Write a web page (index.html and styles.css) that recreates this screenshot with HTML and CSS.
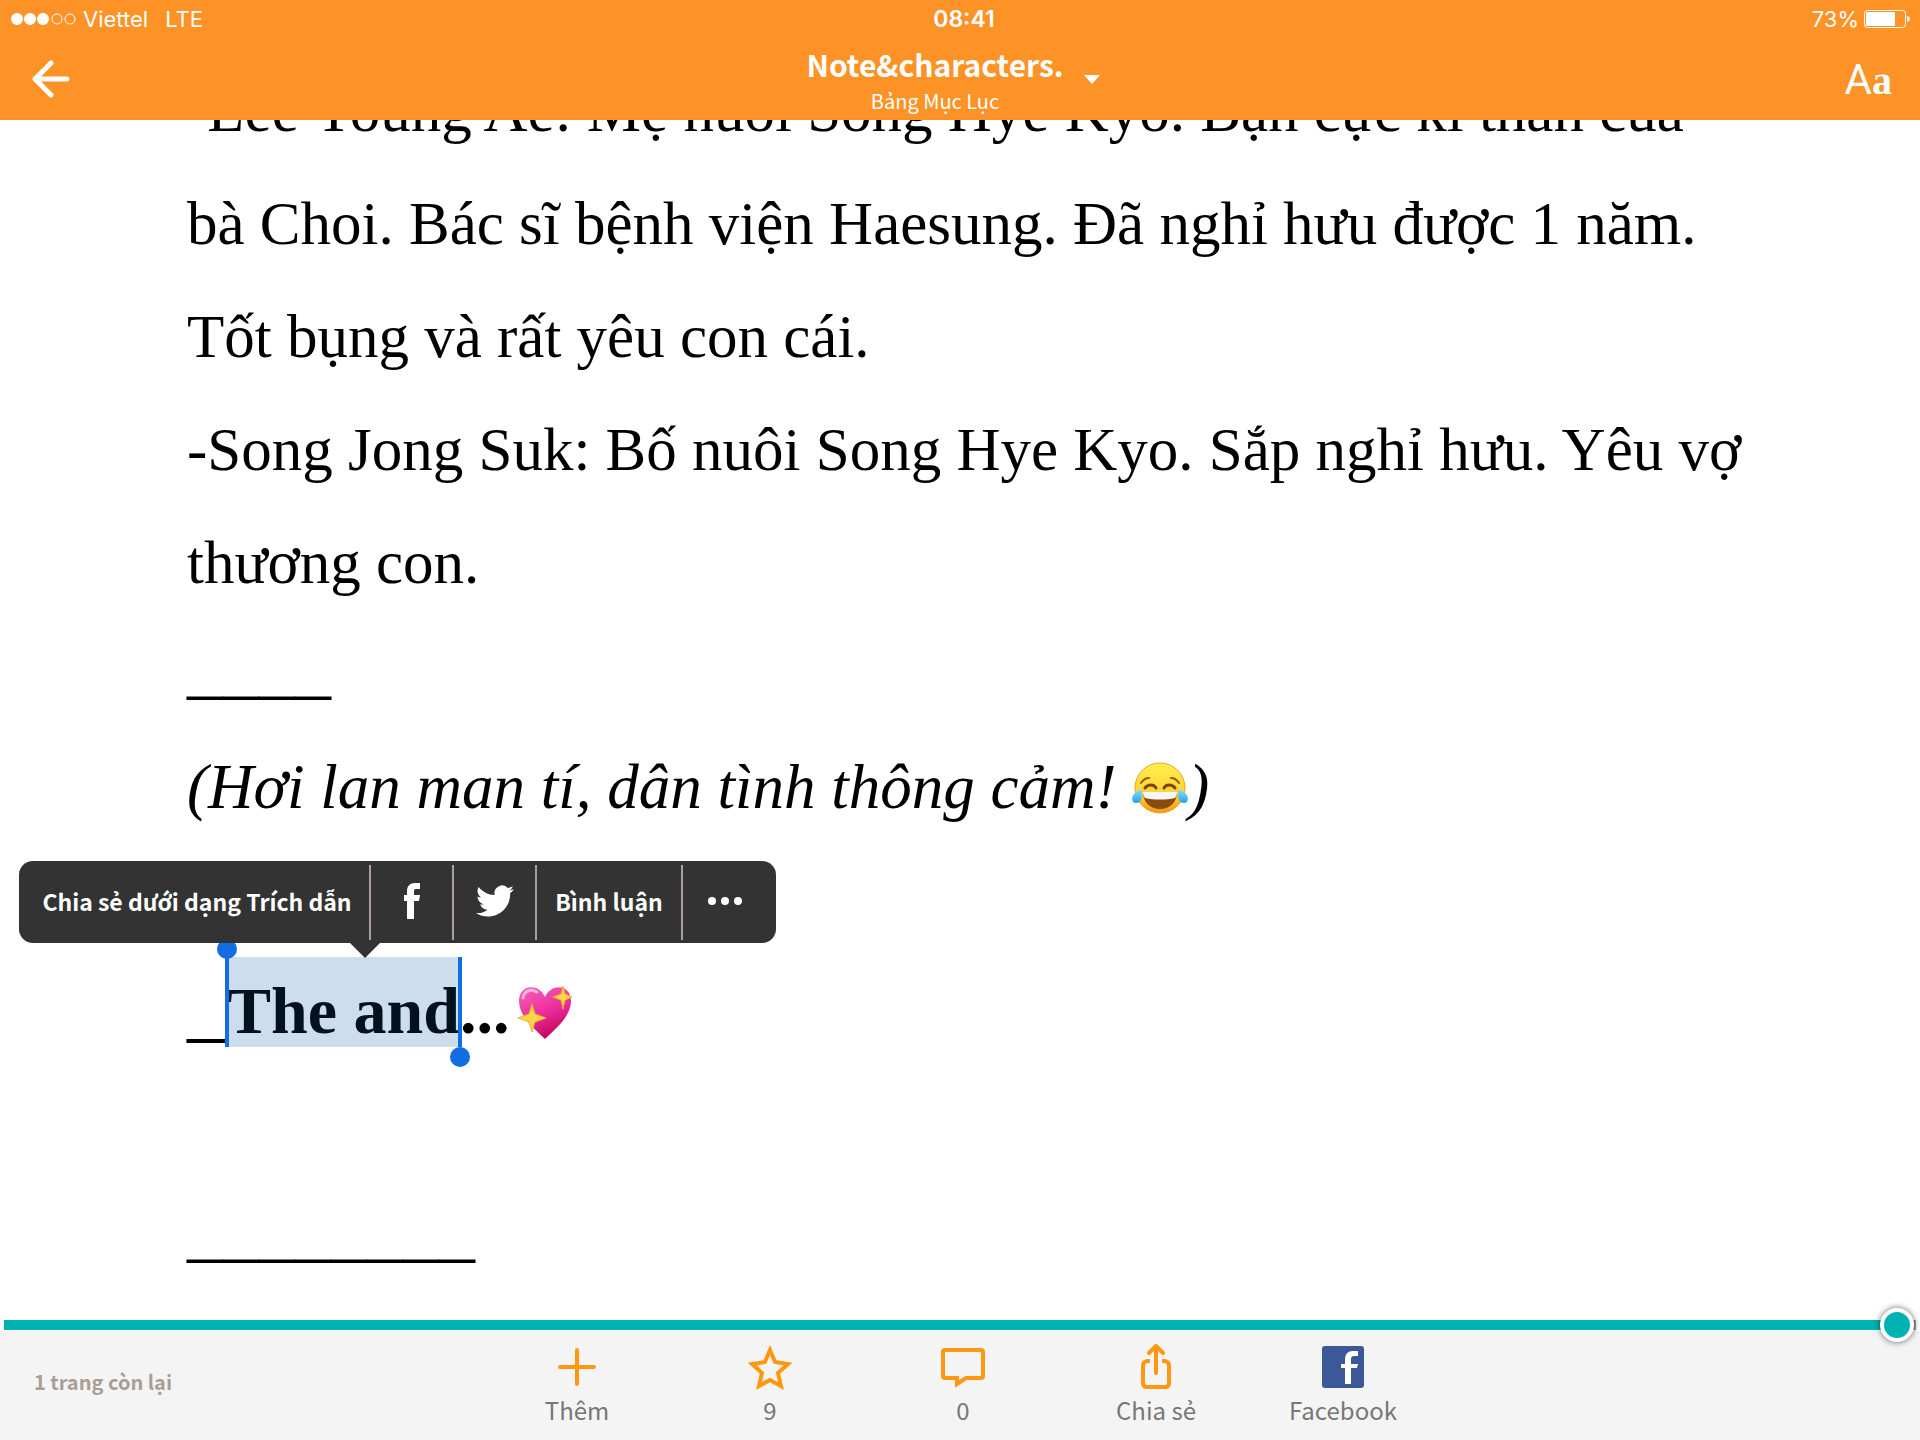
FILE: index.html
```html
<!DOCTYPE html>
<html lang="vi">
<head>
    <meta charset="UTF-8">
    <meta name="viewport" content="width=device-width, initial-scale=1.0">
    <title>Note&amp;characters.</title>
    <link rel="stylesheet" href="styles.css">
</head>
<body>
    <header class="header">
        <div class="status-bar">
            <div class="carrier">
                <svg class="signal" width="68" height="14" viewBox="0 0 68 14">
                    <circle cx="7" cy="7" r="6" fill="#fff"/>
                    <circle cx="20" cy="7" r="6" fill="#fff"/>
                    <circle cx="33" cy="7" r="6" fill="#fff"/>
                    <circle cx="47" cy="7" r="5" fill="none" stroke="#fff"/>
                    <circle cx="60" cy="7" r="5" fill="none" stroke="#fff"/>
                </svg>
                <span>Viettel</span>
                <span class="network">LTE</span>
            </div>
            <div class="time">08:41</div>
            <div class="battery">
                <span>73%</span>
                <svg width="46" height="18" viewBox="0 0 46 18">
                    <rect x="0.5" y="0.5" width="41" height="17" rx="3" fill="none" stroke="#fff"/>
                    <rect x="2" y="2" width="29" height="14" rx="1" fill="#fff"/>
                    <path d="M43 6c4 1 4 5 0 6z" fill="#fff"/>
                </svg>
            </div>
        </div>
        <nav class="nav-bar">
            <button class="back-btn" aria-label="Quay lại">
                <svg width="38" height="38" viewBox="0 0 38 38" fill="none" stroke="#fff" stroke-width="5" stroke-linecap="round" stroke-linejoin="round">
                    <path d="M19 3L3 19l16 16M4 19h31"/>
                </svg>
            </button>
            <button class="chapter-btn">
                <span class="chapter-names">
                    <span class="chapter-title">Note&amp;characters.</span>
                    <span class="chapter-sub">Bảng Mục Lục</span>
                </span>
                <svg class="caret" width="16" height="9" viewBox="0 0 16 9"><path d="M0 0h16L8 9z" fill="#fff"/></svg>
            </button>
            <button class="font-btn"><span class="font-sans">A</span><span class="font-serif">a</span></button>
        </nav>
    </header>

    <main class="reader">
        <article class="story">
            <p>-Lee Young Ae: Mẹ nuôi Song Hye Kyo. Bạn cực kì thân của<br>bà Choi. Bác sĩ bệnh viện Haesung. Đã nghỉ hưu được 1 năm.<br>Tốt bụng và rất yêu con cái.</p>
            <p>-Song Jong Suk: Bố nuôi Song Hye Kyo. Sắp nghỉ hưu. Yêu vợ<br>thương con.</p>
            <p class="rule">____</p>
            <p class="single"><em>(Hơi lan man tí, dân tình thông cảm! <svg class="emoji" viewBox="0 0 56 54" role="img" aria-label="😂">
                <defs>
                    <linearGradient id="face" x1="0" y1="0" x2="0" y2="1">
                        <stop offset="0" stop-color="#fff04f"/>
                        <stop offset="0.6" stop-color="#fdd236"/>
                        <stop offset="1" stop-color="#f09a1a"/>
                    </linearGradient>
                    <linearGradient id="tear" x1="0" y1="0" x2="0" y2="1">
                        <stop offset="0" stop-color="#8fe0fb"/>
                        <stop offset="1" stop-color="#1ba4ec"/>
                    </linearGradient>
                </defs>
                <circle cx="28" cy="27" r="25" fill="url(#face)" stroke="#f3a01e"/>
                <path d="M9 22c2-3 4-5 8-5M47 22c-2-3-4-5-8-5" fill="none" stroke="#9b5a10" stroke-width="2" stroke-linecap="round"/>
                <path d="M13 27c3-4 9-4 11 0M32 27c2-4 8-4 11 0" fill="none" stroke="#7a430b" stroke-width="3" stroke-linecap="round"/>
                <path d="M11 31h34c0 10-7 17-17 17S11 41 11 31z" fill="#8a4a08"/>
                <path d="M11 31h34c0 3-1 5-2 6-9 2-21 2-30 0-1-1-2-3-2-6z" fill="#f4f6fa"/>
                <path d="M10 28c0 8 0 14-6 14-5 0-5-7-1-10 2-2 5-2 7-4zM46 28c0 8 0 14 6 14 5 0 5-7 1-10-2-2-5-2-7-4z" fill="url(#tear)"/>
            </svg>)</em></p>
            <p class="ending"><strong><span class="lead">_</span><span class="selected">The and<i class="handle handle-start"></i><i class="handle handle-end"></i></span>...<svg class="emoji emoji-heart" viewBox="0 0 56 54" role="img" aria-label="💖">
                <defs>
                    <linearGradient id="heart" x1="0" y1="0" x2="0.4" y2="1">
                        <stop offset="0" stop-color="#f865b8"/>
                        <stop offset="0.6" stop-color="#ec2a9c"/>
                        <stop offset="1" stop-color="#c50a5e"/>
                    </linearGradient>
                </defs>
                <path d="M28 53C19 44 2 31 2 15 2-2 22-3 28 11 34-3 54-2 54 15c0 16-17 29-26 38z" fill="url(#heart)"/>
                <path d="M6 12c1-7 8-10 14-6" fill="none" stroke="#fcb3dc" stroke-width="3" stroke-linecap="round"/>
                <path d="M15 18l3 10 11 4-11 4-3 10-3-10-11-4 11-4zM46 0l2 8 7 3-7 3-2 9-2-9-8-3 8-3z" fill="#fbd548" stroke="#f3b02c"/>
            </svg></strong>
                <span class="popup">
                    <button class="popup-quote">Chia sẻ dưới dạng Trích dẫn</button>
                    <button class="popup-icon" aria-label="Facebook">
                        <svg width="18" height="36" viewBox="0 0 18 36"><path d="M4 36V18H1v-6h3V8c0-5 3-8 8-8h5v6h-4c-2 0-2 1-2 3v3h6l-1 6h-5v18z" fill="#fff"/></svg>
                    </button>
                    <button class="popup-icon" aria-label="Twitter">
                        <svg width="38" height="38" viewBox="0 0 24 24"><path d="M23.95 4.57a10 10 0 0 1-2.82.77 4.96 4.96 0 0 0 2.16-2.72c-.95.55-2 .95-3.13 1.18a4.92 4.92 0 0 0-8.38 4.48C7.69 8.09 4.07 6.13 1.64 3.16a4.92 4.92 0 0 0 1.52 6.57 4.9 4.9 0 0 1-2.23-.61v.06a4.92 4.92 0 0 0 3.95 4.83 5 5 0 0 1-2.21.08 4.94 4.94 0 0 0 4.6 3.42A9.87 9.87 0 0 1 0 19.54a13.99 13.99 0 0 0 7.56 2.21c9.05 0 14-7.5 14-13.98 0-.21 0-.42-.02-.63a9.94 9.94 0 0 0 2.46-2.55z" fill="#fff"/></svg>
                    </button>
                    <button class="popup-comment">Bình luận</button>
                    <button class="popup-more" aria-label="Thêm nữa">
                        <svg width="36" height="10" viewBox="0 0 36 10" fill="#fff"><circle cx="5" cy="5" r="4"/><circle cx="18" cy="5" r="4"/><circle cx="31" cy="5" r="4"/></svg>
                    </button>
                </span>
            </p>
            <p class="rule">________</p>
        </article>
    </main>

    <input class="progress" type="range" min="0" max="1000" value="999" aria-label="Tiến độ đọc">

    <footer class="footer">
        <span class="pages-left">1 trang còn lại</span>
        <div class="actions">
            <button>
                <svg width="46" height="46" viewBox="0 0 46 46" fill="none" stroke="#ff9711" stroke-width="4" stroke-linecap="round"><path d="M23 6v34M6 23h34"/></svg>
                <span>Thêm</span>
            </button>
            <button>
                <svg width="46" height="46" viewBox="0 0 46 46" fill="none" stroke="#ff9711" stroke-width="4"><path d="M23 6l5 12 13 2-10 9 3 13-11-6-11 6 3-13L5 20l13-2z"/></svg>
                <span>9</span>
            </button>
            <button>
                <svg width="46" height="46" viewBox="0 0 46 46" fill="none" stroke="#ff9711" stroke-width="4"><path d="M5 6h36q2 0 2 2v24q0 2-2 2H26l-9 6v-6H5q-2 0-2-2V8q0-2 2-2z"/></svg>
                <span>0</span>
            </button>
            <button>
                <svg width="46" height="46" viewBox="0 0 46 46" fill="none" stroke="#ff9711" stroke-width="4" stroke-linecap="round"><path d="M23 29V3M16 9l7-7 7 7" stroke-linejoin="round"/><path d="M17 17h-2q-5 0-5 5v17q0 4 4 4h18q4 0 4-4V22q0-5-5-5h-2" stroke-linecap="butt"/></svg>
                <span>Chia sẻ</span>
            </button>
            <button class="facebook">
                <svg width="46" height="46" viewBox="0 0 46 46"><rect x="2" y="2" width="42" height="42" rx="3" fill="#3b5998"/><path d="M25 40V24h-4v-4h4v-4c0-6 3-9 8-9h5v5h-4c-2 0-3 1-3 3v5h7l-1 4h-6v16z" fill="#fff"/></svg>
                <span>Facebook</span>
            </button>
        </div>
    </footer>
</body>
</html>
```
FILE: styles.css
```css
* {
    box-sizing: border-box;
}

body {
    margin: 0;
    height: 100vh;
    display: flex;
    flex-direction: column;
    overflow: hidden;
    background-color: #fff;
    font-family: "Noto Sans CJK SC", "Noto Sans", sans-serif;
}

button {
    padding: 0;
    border: none;
    background: none;
    color: inherit;
    font-family: inherit;
    cursor: pointer;
}

svg {
    display: block;
}

/* Header */
.header {
    position: relative;
    z-index: 2;
    height: 120px;
    flex: none;
    background-color: #fd9226;
    color: #fff;
}

.status-bar {
    display: grid;
    grid-template-columns: 1fr auto 1fr;
    align-items: center;
    height: 38px;
    padding: 0 10px;
    font-family: Inter, sans-serif;
    font-size: 22px;
}

.carrier,
.battery {
    display: flex;
    align-items: center;
    gap: 5px;
}

.network {
    margin-left: 12px;
}

.time {
    font-size: 23px;
    font-weight: 600;
    padding-left: 8px;
}

.battery {
    justify-content: flex-end;
}

.nav-bar {
    display: grid;
    grid-template-columns: 1fr auto 1fr;
    align-items: center;
    height: 82px;
    padding: 0 28px 0 32px;
}

.back-btn {
    justify-self: start;
}

.chapter-btn {
    display: flex;
    align-items: center;
    gap: 20px;
    margin-right: 18px;
}

.chapter-names {
    display: flex;
    flex-direction: column;
}

.chapter-title {
    font-size: 30px;
    font-weight: bold;
    line-height: 44px;
}

.chapter-sub {
    font-size: 20px;
    line-height: 30px;
}

.font-btn {
    justify-self: end;
    display: flex;
    align-items: baseline;
}

.font-sans {
    font-family: Roboto, sans-serif;
    font-size: 42px;
}

.font-serif {
    font-family: "Liberation Serif", serif;
    font-size: 40px;
    font-weight: bold;
}

/* Story text */
.reader {
    flex: 1;
    min-height: 0;
    overflow: hidden;
}

.story {
    margin-top: -66px;
    padding-left: 187px;
    font-family: Georgia, "Liberation Serif", serif;
    font-size: 61px;
    line-height: 113px;
    color: #000;
    white-space: nowrap;
}

.story p {
    margin: 0;
}

.story .single,
.story .ending {
    line-height: 112px;
}

.story .rule {
    padding-bottom: 16px;
    font-size: 72px;
    line-height: 96px;
}

.story .ending {
    position: relative;
    height: 112px;
    margin: 113px 0;
}

.story em {
    font-size: 63px;
}

.story strong {
    font-size: 66px;
    line-height: 1;
}

.emoji {
    display: inline-block;
    width: 56px;
    height: 54px;
    vertical-align: -7px;
}

.emoji-heart {
    margin-left: 8px;
}

.story .lead {
    font-size: 80px;
    font-weight: normal;
}

.selected {
    position: relative;
    padding-top: 17px;
    background-color: #ccdded;
    color: #001120;
}

.handle {
    position: absolute;
    top: 0;
    bottom: 0;
    width: 4px;
    background-color: #126de2;
}

.handle::after {
    content: "";
    position: absolute;
    left: -8px;
    width: 20px;
    height: 20px;
    border-radius: 50%;
    background-color: #126de2;
}

.handle-start {
    left: -2px;
}

.handle-start::after {
    top: -18px;
}

.handle-end {
    right: -2px;
}

.handle-end::after {
    bottom: -20px;
}

/* Selection popup */
.popup {
    position: absolute;
    left: -168px;
    bottom: 126px;
    display: flex;
    align-items: center;
    height: 82px;
    border-radius: 14px;
    background-color: #333;
    color: #fff;
}

.popup::after {
    content: "";
    position: absolute;
    top: 81px;
    left: 330px;
    border: 16px solid transparent;
    border-top-color: #333;
    border-bottom: none;
}

.popup button {
    display: flex;
    align-items: center;
    justify-content: center;
    width: 83px;
    height: 75px;
    padding-bottom: 2px;
    font-family: "Noto Sans CJK SC", "Noto Sans", sans-serif;
    font-size: 23px;
    font-weight: bold;
    border-right: 2px solid #ac9f97;
}

.popup .popup-quote {
    width: 352px;
    padding-left: 6px;
}

.popup .popup-comment {
    width: 146px;
}

.popup .popup-more {
    width: 93px;
    padding-right: 10px;
    border-right: none;
}

/* Reading progress */
.progress {
    position: relative;
    z-index: 1;
    flex: none;
    appearance: none;
    height: 10px;
    margin: 0 4px 1px;
    background: linear-gradient(to right, #00b2b2 99%, #999 99%);
}

.progress::-webkit-slider-runnable-track {
    height: 10px;
}

.progress::-webkit-slider-thumb {
    appearance: none;
    width: 34px;
    height: 34px;
    margin-top: -12px;
    border: 4px solid #fff;
    border-radius: 50%;
    background-color: #00b2b2;
    box-shadow: 0 0 6px rgba(0, 0, 0, 0.6);
}

/* Footer */
.footer {
    flex: none;
    display: grid;
    grid-template-columns: 1fr auto 1fr;
    height: 109px;
    padding-right: 6px;
    background-color: #f4f4f4;
}

.pages-left {
    align-self: center;
    padding: 0 0 8px 34px;
    font-size: 20px;
    font-weight: bold;
    color: #a99e96;
}

.actions {
    display: flex;
}

.actions button {
    display: flex;
    flex-direction: column;
    align-items: center;
    gap: 2px;
    width: 193px;
    padding-top: 13px;
    font-size: 24px;
    line-height: 36px;
    color: #777;
}

.actions .facebook {
    width: 181px;
}
```
